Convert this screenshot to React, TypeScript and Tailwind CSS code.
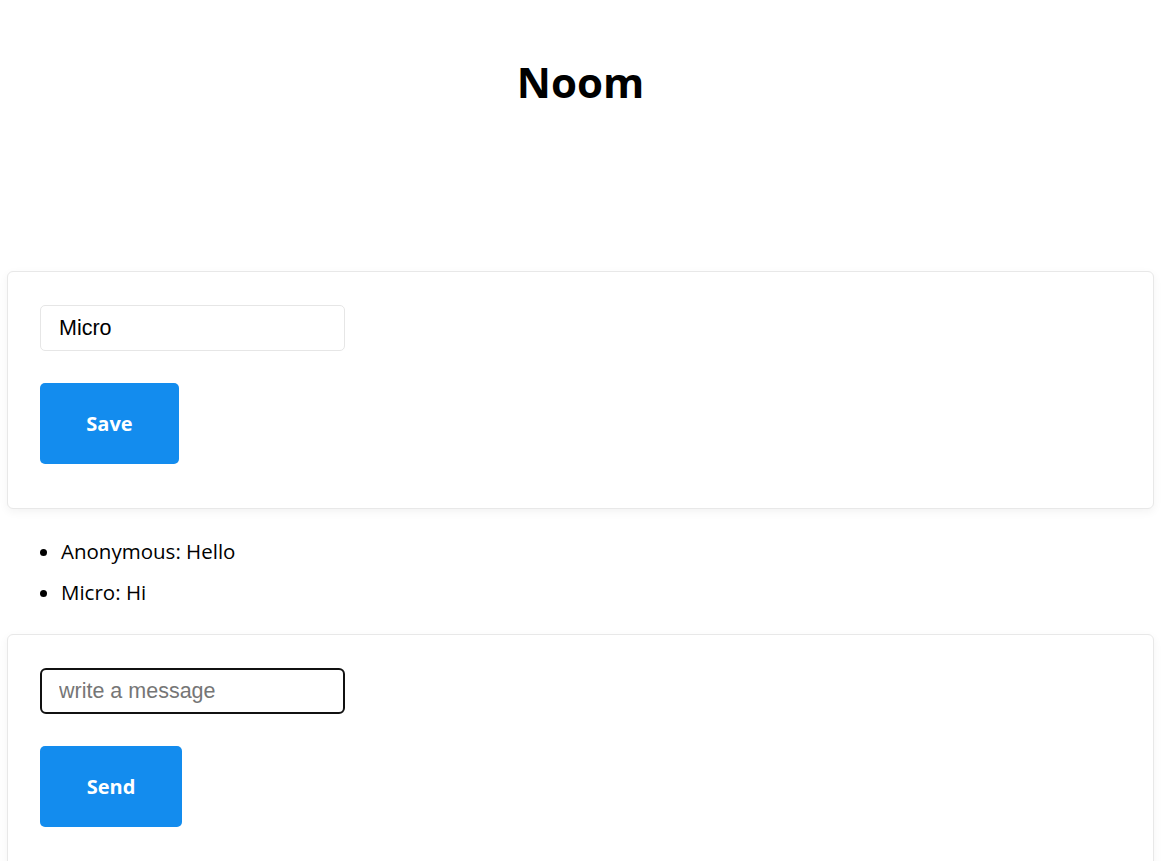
import React, { useState } from 'react';

const uiFont = { fontFamily: '"Open Sans", "Noto Sans", sans-serif' };
const fieldFont = { fontFamily: '"Liberation Sans", Arial, sans-serif' };

interface Message {
  author: string;
  text: string;
}

const Card: React.FC<{ children: React.ReactNode }> = ({ children }) => (
  <div className="bg-white border border-[#e8e8e8] rounded-[6px] shadow-[0_3px_10px_rgba(0,0,0,0.05)] px-[32px] pt-[33px] pb-[44px]">
    {children}
  </div>
);

export default function App(): React.JSX.Element {
  const [nickname, setNickname] = useState('Micro');
  const [draft, setDraft] = useState('');
  const messages: Message[] = [
    { author: 'Anonymous', text: 'Hello' },
    { author: 'Micro', text: 'Hi' },
  ];

  return (
    <div className="min-h-screen bg-white text-black px-[7px]" style={uiFont}>
      {/* Header */}
      <header className="h-[271px] pt-[52px] text-center">
        <h1 className="text-[42px] leading-[60px] font-bold">Noom</h1>
      </header>

      {/* Nickname form */}
      <Card>
        <form className="flex flex-col gap-[32px] items-start" onSubmit={(e) => e.preventDefault()}>
          <input
            value={nickname}
            onChange={(e) => setNickname(e.target.value)}
            className="w-[305px] h-[46px] border border-[#e6e6e6] rounded-[5px] pl-[18px] text-[21.5px] text-black outline-none"
            style={fieldFont}
          />
          <button
            type="submit"
            className="w-[139px] h-[81px] rounded-[5px] bg-[#138cee] text-white text-[20px] font-bold"
          >
            Save
          </button>
        </form>
      </Card>

      {/* Messages */}
      <ul className="list-disc pl-[54px] mt-[22px] mb-[21px] text-[20.5px]">
        {messages.map((m, i) => (
          <li key={i} className="leading-[41px]">
            {m.author}: {m.text}
          </li>
        ))}
      </ul>

      {/* Message form */}
      <Card>
        <form className="flex flex-col gap-[32px] items-start" onSubmit={(e) => e.preventDefault()}>
          <input
            value={draft}
            onChange={(e) => setDraft(e.target.value)}
            placeholder="write a message"
            className="w-[305px] h-[46px] border-2 border-[#111] rounded-[6px] pl-[17px] text-[21.5px] text-black placeholder:text-[#767676] outline-none"
            style={fieldFont}
          />
          <button
            type="submit"
            className="w-[142px] h-[81px] rounded-[5px] bg-[#138cee] text-white text-[20px] font-bold"
          >
            Send
          </button>
        </form>
      </Card>
    </div>
  );
}
